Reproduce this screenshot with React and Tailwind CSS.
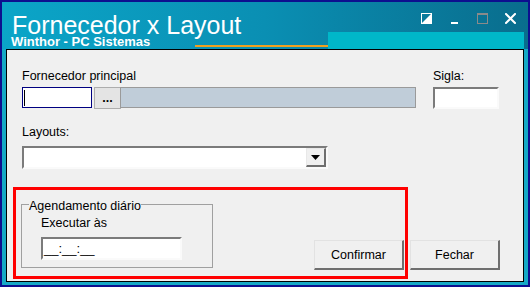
import React from 'react';

const font = { fontFamily: '"Liberation Sans", Arial, sans-serif' };

const RestoreIcon = () => (
    <svg width="11" height="11" viewBox="0 0 11 11">
        <rect x="0.5" y="0.5" width="10" height="10" fill="none" stroke="#fff" strokeWidth="1" />
        <polygon points="11,0 11,11 0,11" fill="#fff" />
    </svg>
);

const MinIcon = () => (
    <svg width="11" height="11" viewBox="0 0 11 11">
        <rect x="2" y="9" width="7" height="2" fill="#fff" />
    </svg>
);

const MaxIcon = () => (
    <svg width="11" height="11" viewBox="0 0 11 11">
        <rect x="0.5" y="0.5" width="10" height="10" fill="none" stroke="#8a8a8a" strokeWidth="1" />
        <rect x="0" y="0" width="11" height="2" fill="#8a8a8a" />
    </svg>
);

const CloseIcon = () => (
    <svg width="11" height="11" viewBox="0 0 11 11">
        <path d="M1 1 L10 10 M10 1 L1 10" stroke="#fff" strokeWidth="2" strokeLinecap="square" />
    </svg>
);

const Sunken = ({ className = '', children }) => (
    <div
        className={`bg-white border-2 border-t-[#7b7b7b] border-l-[#7b7b7b] border-r-[#fafafa] border-b-[#fafafa] ${className}`}
    >
        {children}
    </div>
);

const WinButton = ({ children, className = '' }) => (
    <button
        className={`h-[30px] w-[90px] bg-[#f0f0f0] border-t border-l border-r-2 border-b-2 border-t-[#e2e2e2] border-l-[#e2e2e2] border-r-[#6f6f6f] border-b-[#6f6f6f] text-[12.5px] text-black leading-[14px] ${className}`}
    >
        {children}
    </button>
);

export default function App() {
    return (
        <div
            className="w-[530px] h-[287px] border-2 border-[#0d0f8f] bg-[#16a9c6] flex flex-col overflow-hidden"
            style={font}
        >
            {/* Barra de título */}
            <div className="h-[47px] flex items-stretch bg-gradient-to-r from-[#0ba5c8] via-[#0a8fb3] to-[#096d8d]">
                <div className="w-[193px] pl-[10px] pt-[12px] text-white">
                    <div className="text-[25px] leading-[22px] whitespace-nowrap">Fornecedor x Layout</div>
                    <div className="text-[13px] leading-[11px] font-bold -ml-[1px] whitespace-nowrap">
                        Winthor - PC Sistemas
                    </div>
                </div>
                <div className="w-[133px] flex flex-col justify-end pb-[2px]">
                    <div className="h-[2px] bg-[#f0a020]"></div>
                </div>
                <div className="flex-1 flex flex-col justify-between mr-[4px]">
                    <div className="flex justify-end gap-[17px] pr-[8px] mt-[11px]">
                        <RestoreIcon />
                        <MinIcon />
                        <MaxIcon />
                        <CloseIcon />
                    </div>
                    <div className="h-[17px] bg-[#00b7c9]"></div>
                </div>
            </div>

            {/* Conteúdo */}
            <div className="flex-1 mx-[4px] mb-[3px] border border-black bg-[#f0f0f0] px-[6px] text-[12.5px] leading-[14px] text-black">
                <div className="pl-[9px] pt-[19px]">
                    <div className="flex gap-[17px]">
                        <div className="w-[394px]">
                            <div>Fornecedor principal</div>
                            <div className="flex mt-[4px] items-start">
                                <div className="w-[70px] h-[21px] bg-white border border-[#000080] flex items-center">
                                    <div className="w-[1px] h-[16px] bg-black ml-[1px]"></div>
                                </div>
                                <div className="w-[27px] h-[22px] ml-[2px] bg-[#e4e4e4] border border-[#adadad] flex items-end justify-center leading-[16px] pb-[2px] font-bold">
                                    ...
                                </div>
                                <div className="flex-1 -ml-[1px] h-[21px] bg-[#c0cdd9] border border-[#9a9a9a]"></div>
                            </div>
                        </div>
                        <div>
                            <div>Sigla:</div>
                            <Sunken className="w-[66px] h-[22px] mt-[4px]" />
                        </div>
                    </div>

                    <div className="mt-[16px]">Layouts:</div>
                    <Sunken className="w-[306px] h-[23px] mt-[7px] flex justify-end items-stretch">
                        <div className="w-[20px] bg-[#f0f0f0] border-t border-l border-r-2 border-b-2 border-t-[#e8e8e8] border-l-[#e8e8e8] border-r-[#6f6f6f] border-b-[#6f6f6f] flex items-center justify-center">
                            <svg width="9" height="5" viewBox="0 0 9 5">
                                <polygon points="0,0 9,0 4.5,5" fill="#000" />
                            </svg>
                        </div>
                    </Sunken>
                </div>

                <div className="flex items-end mt-[18px]">
                    <div className="w-[395px] h-[92px] border-[3px] border-[#ff0000] flex justify-between pl-[5px] pr-[1px]">
                        <fieldset className="self-start mt-[6px] w-[192px] border border-[#a0a0a0] pl-[7px] pb-[7px]">
                            <legend className="pt-[3px] leading-[14px]">Agendamento diário</legend>
                            <div className="ml-[12px] mt-[3px]">Executar às</div>
                            <Sunken className="ml-[12px] mt-[7px] w-[141px] h-[23px] pl-[1px] flex items-center">
                                <span className="text-[13px]">__:__:__</span>
                            </Sunken>
                        </fieldset>
                        <WinButton className="self-end mb-[6px]">Confirmar</WinButton>
                    </div>
                    <WinButton className="ml-[2px] mb-[9px]">Fechar</WinButton>
                </div>
            </div>
        </div>
    );
}
